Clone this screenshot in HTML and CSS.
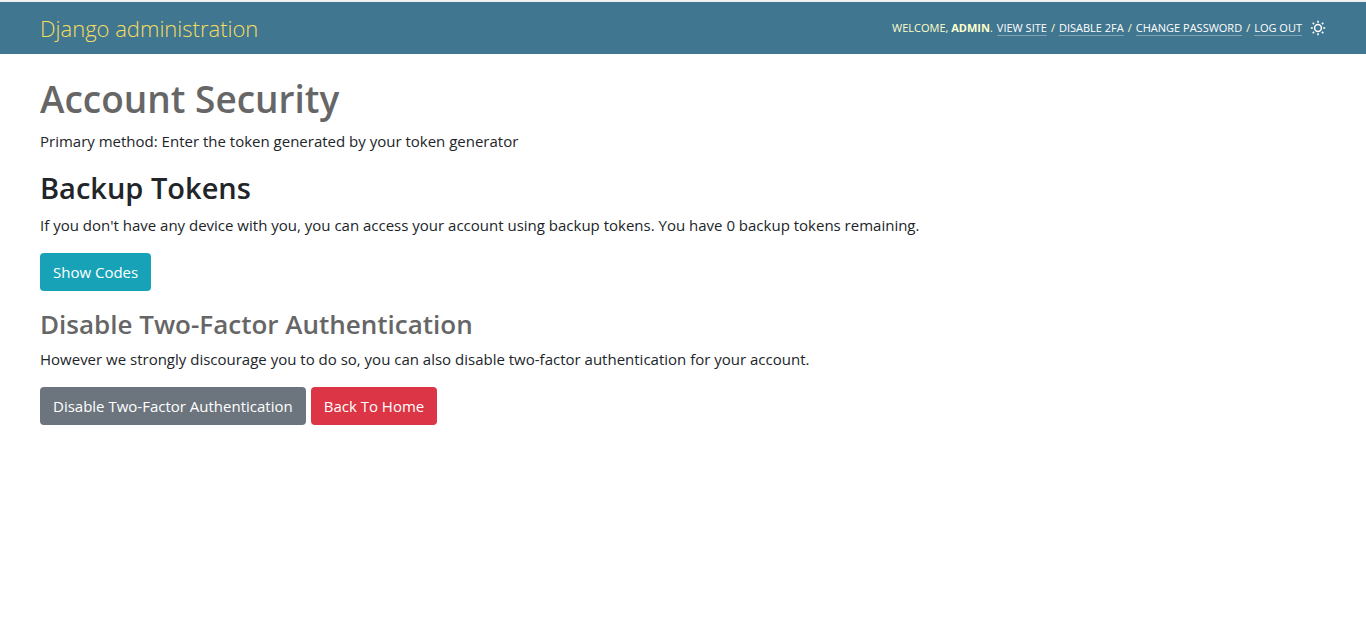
FILE: index.html
```html
<!DOCTYPE html>
<html lang="en">
<head>
<meta charset="utf-8">
<title>Account Security | Django administration</title>
<link rel="stylesheet" href="styles.css">
</head>
<body>
<header class="header">
  <a class="brand" href="#">Django administration</a>
  <div class="user-tools">
    <span class="welcome">Welcome, <strong>admin</strong>.</span>
    <a href="#">View site</a> <span>/</span>
    <a href="#">Disable 2FA</a> <span>/</span>
    <a href="#">Change password</a> <span>/</span>
    <button class="logout" type="button">Log out</button>
    <button class="theme-toggle" type="button" aria-label="Toggle theme">
      <svg viewBox="0 0 16 16" width="16" height="16" aria-hidden="true">
        <circle cx="8" cy="8" r="3.4" fill="none" stroke="currentColor" stroke-width="1.5"/>
        <path d="M8 .8v2M8 13.2v2M.8 8h2M13.2 8h2M2.7 2.7l1.4 1.4M11.9 11.9l1.4 1.4M2.7 13.3l1.4-1.4M11.9 4.1l1.4-1.4" stroke="currentColor" stroke-width="1.6"/>
      </svg>
    </button>
  </div>
</header>
<main class="content">
  <h1>Account Security</h1>
  <p>Primary method: Enter the token generated by your token generator</p>
  <h2>Backup Tokens</h2>
  <p>If you don't have any device with you, you can access your account using backup tokens. You have 0 backup tokens remaining.</p>
  <div class="actions">
    <a class="btn btn-info" href="#">Show Codes</a>
  </div>
  <h3>Disable Two-Factor Authentication</h3>
  <p>However we strongly discourage you to do so, you can also disable two-factor authentication for your account.</p>
  <div class="actions">
    <a class="btn btn-secondary" href="#">Disable Two-Factor Authentication</a>
    <a class="btn btn-danger" href="#">Back To Home</a>
  </div>
</main>
</body>
</html>
```
FILE: styles.css
```css
* {
  box-sizing: border-box;
}

body {
  margin: 0;
  background: #fff;
  color: #212529;
  font-family: "Segoe UI", "Open Sans", "Noto Sans", sans-serif;
  font-size: 15px;
  line-height: 24px;
}

.header {
  display: flex;
  align-items: center;
  justify-content: space-between;
  padding: 10px 40px;
  border-top: 2px solid #f0f0f2;
  background: #417690;
  color: #ffc;
}

.brand {
  color: #f5dd5d;
  font-size: 22px;
  font-weight: 300;
  line-height: 32px;
  text-decoration: none;
}

.user-tools {
  display: flex;
  align-items: center;
  gap: 4px;
  font-size: 11px;
  line-height: 14px;
  text-transform: uppercase;
}

.user-tools a,
.logout {
  border: 0;
  border-bottom: 1px solid #7fa3b5;
  color: #fff;
  text-decoration: none;
}

.logout {
  padding: 0;
  background: none;
  font: inherit;
  text-transform: inherit;
}

.theme-toggle {
  display: flex;
  margin-left: 4px;
  padding: 0;
  border: 0;
  background: none;
  color: #fff;
}

.content {
  padding: 21px 40px;
}

h1,
h2,
h3 {
  margin: 0 0 6px;
  font-weight: 600;
}

h1 {
  color: #666;
  font-size: 37px;
  line-height: 48px;
}

h2 {
  font-size: 29px;
  line-height: 38px;
}

h3 {
  color: #666;
  font-size: 26px;
  line-height: 34px;
}

p {
  margin: 0 0 16px;
}

.actions {
  display: flex;
  gap: 5px;
  margin-bottom: 16px;
}

.btn {
  padding: 7px 13px;
  border-radius: 4px;
  color: #fff;
  text-decoration: none;
}

.btn-info {
  background: #17a2b8;
}

.btn-secondary {
  background: #6c757d;
}

.btn-danger {
  background: #dc3545;
}
```
